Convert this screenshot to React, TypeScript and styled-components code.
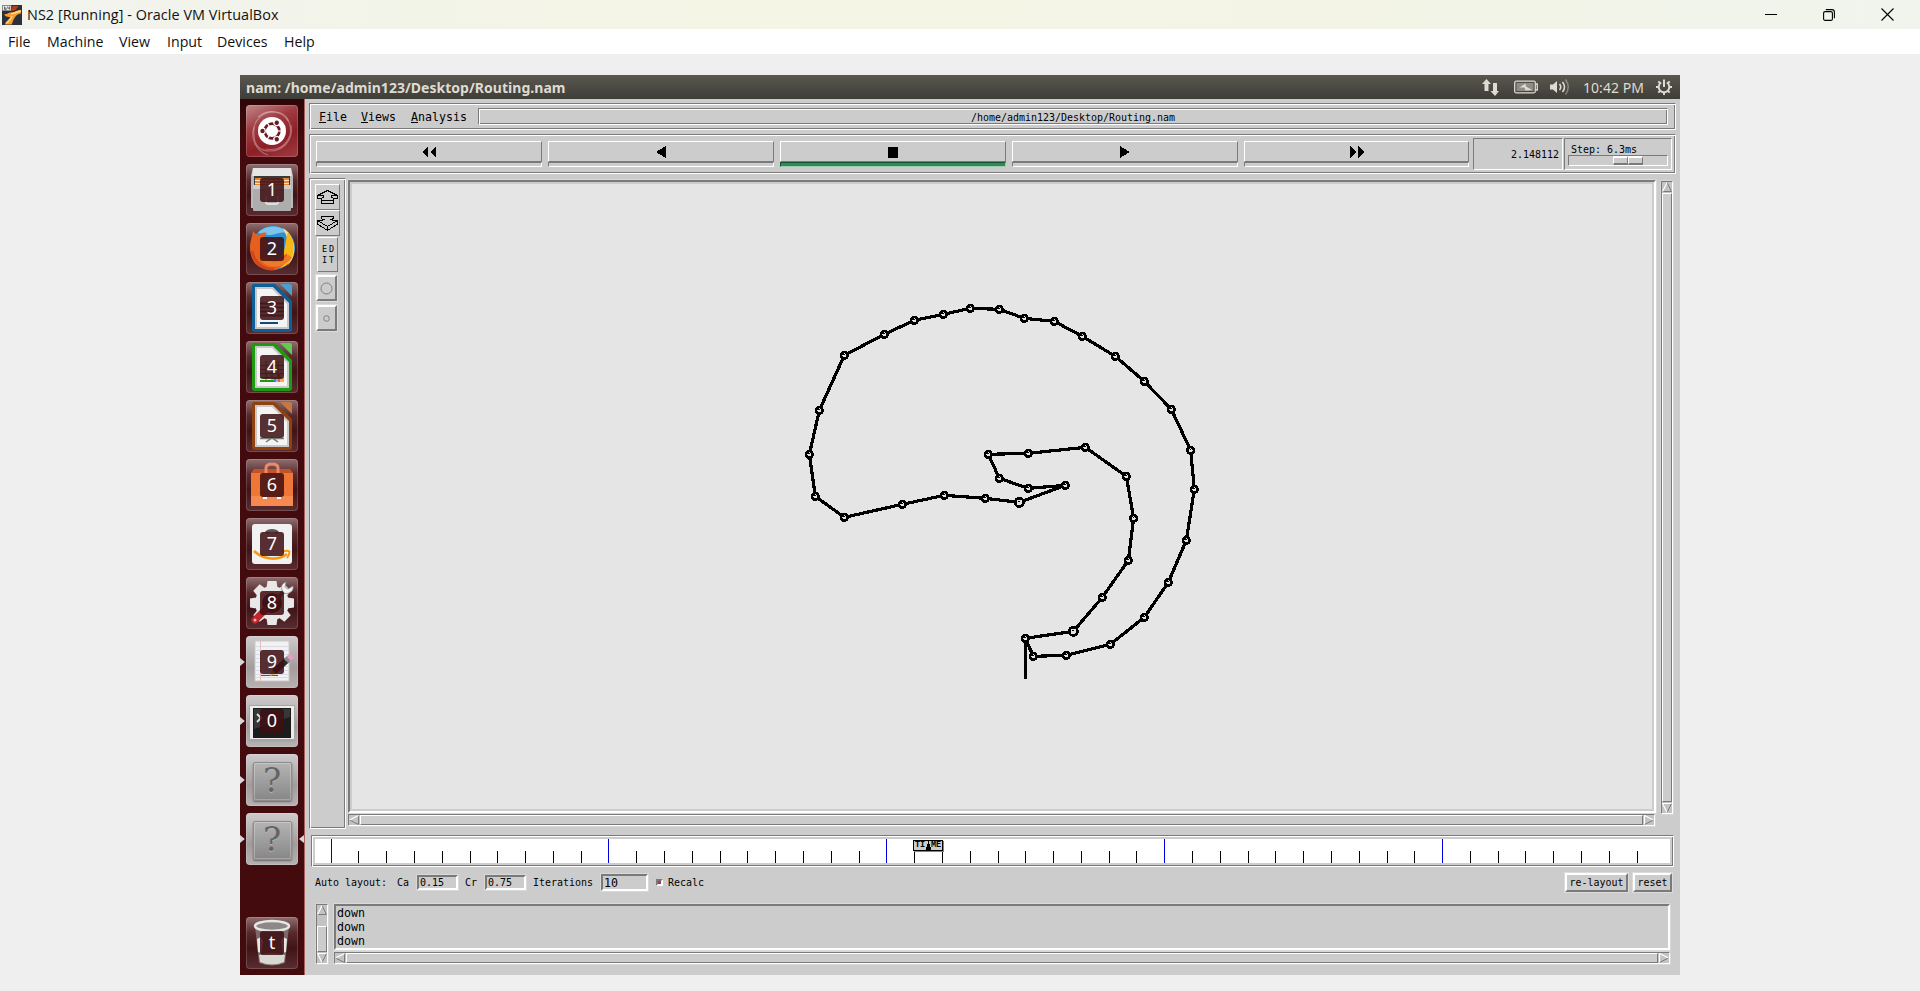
import React from 'react';
import styled, { createGlobalStyle, css } from 'styled-components';

const FACE = '#cccccc';
const DARK = '#7a7a7a';
const LIGHT = '#ffffff';

const GlobalStyle = createGlobalStyle`
  * { box-sizing: border-box; }
  body { margin: 0; background: #efefef; overflow: hidden; }
  svg { display: block; flex: none; }
`;

const sunken = css`
  border: 1px solid;
  border-color: ${DARK} ${LIGHT} ${LIGHT} ${DARK};
`;
const raised = css`
  border: 1px solid;
  border-color: ${LIGHT} ${DARK} ${DARK} ${LIGHT};
`;
const groove = css`
  ${sunken}
  box-shadow: inset 1px 1px ${LIGHT}, inset -1px -1px ${DARK};
`;

/* ---------- host window ---------- */

const HostWindow = styled.div`
  width: 1920px;
  height: 991px;
  display: flex;
  flex-direction: column;
  background: #efefef;
  font-family: 'Open Sans', 'Noto Sans', sans-serif;
  color: #111;
`;

const TitleBar = styled.header`
  height: 29px;
  display: flex;
  align-items: center;
  padding-left: 2px;
  background: linear-gradient(90deg, #f1f3ee 0%, #f4f5e4 40%, #f3f4e6 70%, #f1f4ed 100%);
`;

const HostTitle = styled.span`
  margin: -1px 0 0 5px;
  font-size: 14.4px;
  letter-spacing: 0.05px;
  white-space: nowrap;
`;

const WindowControls = styled.div`
  margin-left: auto;
  display: flex;
  align-items: center;
  gap: 46px;
  padding-right: 26px;
`;

const HostMenu = styled.nav`
  height: 25px;
  display: flex;
  align-items: center;
  padding: 0 0 1px 8px;
  background: #fff;
  font-size: 14.2px;
`;

const HostMenuItem = styled.span<{ $w: number }>`
  width: ${(p) => p.$w}px;
  white-space: nowrap;
`;

/* ---------- guest desktop ---------- */

const Guest = styled.main`
  width: 1440px;
  height: 900px;
  margin: 21px 0 0 240px;
  display: flex;
  flex-direction: column;
  background: ${FACE};
`;

const Panel = styled.div`
  height: 24px;
  display: flex;
  align-items: center;
  padding: 0 8px 0 6px;
  background: linear-gradient(#5a584f, #3e3d38);
  color: #dfdbd2;
`;

const PanelTitle = styled.span`
  font: 700 14px/23px 'Noto Sans', sans-serif;
  letter-spacing: 0.03px;
  white-space: nowrap;
`;

const Indicators = styled.div`
  margin-left: auto;
  display: flex;
  align-items: center;
  > svg + svg { margin-left: 15px; }
  > svg + svg + svg { margin-left: 12px; }
`;

const Clock = styled.span`
  width: 60px;
  margin: 0 13px;
  font: 400 14px/23px 'Noto Sans', sans-serif;
  letter-spacing: 0.05px;
  white-space: nowrap;
`;

const Desktop = styled.div`
  flex: 1;
  display: flex;
  min-height: 0;
`;

const Launcher = styled.aside`
  width: 65px;
  display: flex;
  flex-direction: column;
  padding: 6px 6px 6px 0;
  gap: 7px;
  background: linear-gradient(#2d0608 0, #430b0e 40px, #430b0e 100%);
  border-right: 1px solid #a8605f;
`;

const LauncherSlot = styled.div<{ $last?: boolean }>`
  display: flex;
  align-items: center;
  height: 52px;
  margin-top: ${(p) => (p.$last ? 'auto' : '0')};
`;

const Pip = styled.span<{ $on?: boolean; $side?: 'right' }>`
  flex: none;
  width: ${(p) => (p.$side ? 5 : 6)}px;
  height: 8px;
  background: ${(p) => (p.$on ? '#dad6d7' : 'transparent')};
  clip-path: ${(p) => (p.$side ? 'polygon(100% 0, 0 50%, 100% 100%)' : 'polygon(0 0, 80% 50%, 0 100%)')};
  margin-left: ${(p) => (p.$side ? '1px' : '0')};
`;

const tileSkins = {
  dash: 'linear-gradient(155deg, #c08a8c 0%, #a03b40 35%, #8c1f25 65%, #a13c42 100%)',
  dark: 'linear-gradient(#8f6f70 0%, #57292c 30%, #401417 60%, #5a2c2f 100%)',
  lit: 'linear-gradient(#cfcbcc 0%, #b2acad 40%, #a39c9d 60%, #b8b2b3 100%)',
};

const Tile = styled.div<{ $skin: keyof typeof tileSkins }>`
  flex: none;
  width: 52px;
  height: 52px;
  display: grid;
  place-items: center;
  border-radius: 4px;
  background: ${(p) => tileSkins[p.$skin]};
  box-shadow: inset 0 0 0 1px rgba(255, 255, 255, 0.16);
  > * { grid-area: 1 / 1; }
`;

const KeyHint = styled.span`
  width: 24px;
  height: 24px;
  border-radius: 3px;
  background: rgba(62, 14, 18, 0.86);
  color: #fff;
  font: 400 18px/23px 'Noto Sans', sans-serif;
  text-align: center;
  z-index: 1;
`;

/* ---------- nam window ---------- */

const NamWindow = styled.section`
  flex: 1;
  min-width: 0;
  display: flex;
  flex-direction: column;
  padding: 4px 4px 0;
  background: ${FACE};
  color: #000;
  font-family: 'DejaVu Sans Mono', 'Liberation Mono', monospace;
`;

const text7 = css`
  font-size: 11.63px;
  line-height: 14px;
  white-space: pre;
`;
const text6 = css`
  font-size: 9.97px;
  line-height: 12px;
  white-space: pre;
`;

const MenuRow = styled.div`
  ${groove}
  height: 27px;
  display: flex;
  align-items: center;
  padding: 0 7px 0 9px;
`;

const NamMenu = styled.span<{ $w: number }>`
  ${text7}
  width: ${(p) => p.$w}px;
  padding-top: 1px;
`;

const Hot = styled.u`
  text-decoration-thickness: 1px;
  text-underline-offset: 1px;
`;

const PathBox = styled.div`
  ${groove}
  ${text6}
  flex: 1;
  height: 17px;
  line-height: 17px;
  text-align: center;
`;

const Toolbar = styled.div`
  ${groove}
  height: 40px;
  margin-top: 4px;
  padding: 3px 3px 0 6px;
  display: flex;
`;

const Transport = styled.div`
  width: 226px;
  margin: 3px 6px 0 0;
  &:nth-child(5) {
    width: 225px;
    margin-right: 7px;
  }
`;

const TransportKey = styled.div`
  ${raised}
  height: 21px;
  display: grid;
  place-items: center;
`;

const TransportLamp = styled.div<{ $on?: boolean }>`
  height: 5px;
  border: 1px solid;
  border-color: ${(p) => (p.$on ? '#1b5434 #9fcbb2 #9fcbb2 #1b5434' : `${DARK} ${LIGHT} ${LIGHT} ${DARK}`)};
  background: ${(p) => (p.$on ? '#2e8b57' : FACE)};
`;

const Readout = styled.div`
  ${sunken}
  ${text6}
  width: 90px;
  height: 32px;
  margin: 0 1px 0 -3px;
  padding-right: 3px;
  line-height: 31px;
  text-align: right;
`;

const StepBox = styled.div`
  ${sunken}
  ${text6}
  width: 108px;
  height: 32px;
  padding: 5px 3px 0;
`;

const StepText = styled.span`
  display: block;
  height: 11px;
  padding-left: 3px;
  line-height: 11px;
`;

const Slider = styled.div`
  ${sunken}
  height: 11px;
  padding-left: 44px;
`;

const SliderThumb = styled.div`
  display: flex;
  width: 30px;
  height: 9px;
  > i {
    flex: 1;
    border: solid;
    border-width: 2px 1px 2px 1px;
    border-color: ${LIGHT} ${DARK} ${DARK} ${LIGHT};
  }
`;

const Body = styled.div`
  height: 651px;
  margin-top: 4px;
  display: flex;
`;

const ToolColumn = styled.div`
  ${groove}
  width: 37px;
  padding: 5px 0 0 5px;
`;

const Tool = styled.div<{ $w: number; $h: number; $ml?: number; $gap?: number; $thick?: boolean }>`
  ${raised}
  width: ${(p) => p.$w}px;
  height: ${(p) => p.$h}px;
  margin: 0 0 ${(p) => p.$gap ?? 0}px ${(p) => p.$ml ?? 0}px;
  border-width: ${(p) => (p.$thick ? '2px' : '1px')};
  outline: ${(p) => (p.$thick ? '1px solid #dcdcdc' : 'none')};
  display: grid;
  place-items: center;
  align-content: center;
`;

const EditLabel = styled.span`
  font: 400 8.5px/11px 'DejaVu Sans Mono', monospace;
  letter-spacing: 2px;
  padding-left: 3px;
  white-space: pre;
`;

const CanvasColumn = styled.div`
  width: 1308px;
  margin: 2px 5px 0 2px;
  display: flex;
  flex-direction: column;
  gap: 1px;
`;

const CanvasFrame = styled.div`
  height: 633px;
  border: 2px solid;
  border-color: ${DARK} ${LIGHT} ${LIGHT} ${DARK};
  padding: 2px;
  box-shadow: 0 0 0 1px #d9d9d9;
`;

const Canvas = styled.div`
  height: 625px;
  background: #e5e5e5;
`;

const VBarHolder = styled.div`
  padding-top: 3px;
`;

const Bar = styled.div<{ $vertical?: boolean; $len: number }>`
  ${sunken}
  display: flex;
  flex-direction: ${(p) => (p.$vertical ? 'column' : 'row')};
  width: ${(p) => (p.$vertical ? 12 : p.$len)}px;
  height: ${(p) => (p.$vertical ? p.$len : 12)}px;
  background: #c3c3c3;
  box-shadow: 0 0 0 1px #d6d6d6;
`;

const Thumb = styled.div<{ $before?: number; $vertical?: boolean }>`
  ${raised}
  flex: 1;
  margin: ${(p) => (p.$vertical ? `${p.$before ?? 1}px 0 1px` : `0 1px 0 ${p.$before ?? 1}px`)};
  background: ${FACE};
`;

const Timeline = styled.div`
  ${groove}
  height: 32px;
  width: 1363px;
  margin: 6px 0 0 2px;
  padding: 3px;
`;

const Track = styled.div`
  position: relative;
  height: 24px;
  background: #fff;
`;

const TimeMarker = styled.div`
  position: absolute;
  left: 598px;
  top: 1px;
  width: 30px;
  height: 11px;
  border: 1px solid #000;
  box-shadow: 1px 1px #808080;
  background: ${FACE};
  display: flex;
  justify-content: center;
  align-items: center;
`;

const MarkerText = styled.span`
  width: 11px;
  font: 700 8.5px/9px 'Liberation Mono', monospace;
  text-align: center;
`;

const Options = styled.div`
  ${text6}
  display: flex;
  align-items: center;
  height: 21px;
  margin: 5px 3px 0 6px;
`;

const Label = styled.span<{ $w?: number }>`
  width: ${(p) => (p.$w ? `${p.$w}px` : 'auto')};
  padding-top: 1px;
`;

const Entry = styled.div<{ $w: number; $big?: boolean }>`
  ${(p) => (p.$big ? text7 : text6)}
  width: ${(p) => p.$w}px;
  height: ${(p) => (p.$big ? 17 : 15)}px;
  line-height: ${(p) => (p.$big ? 14 : 12)}px;
  padding-left: 1px;
  margin: 0 7px 0 1px;
  border: 2px solid;
  border-color: ${DARK} ${LIGHT} ${LIGHT} ${DARK};
  box-shadow: 0 0 0 1px #d9d9d9;
`;

const Check = styled.i`
  width: 7px;
  height: 7px;
  margin: 0 5px 0 1px;
  border: 2px solid;
  border-color: ${DARK} ${LIGHT} ${LIGHT} ${DARK};
  background: #b03060;
`;

const PushButton = styled.button<{ $w: number }>`
  ${text6}
  width: ${(p) => p.$w}px;
  height: 19px;
  padding: 1px 0 0;
  margin: 0 1px 0 4px;
  border: 2px solid;
  border-color: ${LIGHT} ${DARK} ${DARK} ${LIGHT};
  box-shadow: 0 0 0 1px #dcdcdc;
  border-radius: 0;
  background: ${FACE};
  color: #000;
  font-family: inherit;
`;

const Spacer = styled.span`
  flex: 1;
`;

const Console = styled.div`
  display: flex;
  gap: 6px;
  margin: 11px 0 0 7px;
`;

const Output = styled.div`
  ${text7}
  width: 1336px;
  height: 46px;
  margin-bottom: 2px;
  padding: 0 1px;
  border: 2px solid;
  border-color: ${DARK} ${LIGHT} ${LIGHT} ${DARK};
  box-shadow: 0 0 0 1px #d9d9d9;
`;

/* ---------- drawings ---------- */

type Dir = 'up' | 'down' | 'left' | 'right';

const arrowEdges: Record<Dir, [string, string]> = {
  up: ['M5 0.5 L0.5 9.5', 'M5 0.5 L9.5 9.5 H0.5'],
  down: ['M9.5 0.5 H0.5 L5 9.5', 'M5 9.5 L9.5 0.5'],
  left: ['M9.5 0.5 L0.5 5', 'M9.5 0.5 V9.5 L0.5 5'],
  right: ['M9.5 5 L0.5 0.5 V9.5', 'M0.5 9.5 L9.5 5'],
};

const Arrow = ({ dir }: { dir: Dir }) => (
  <svg width="10" height="10" viewBox="0 0 10 10" fill="none">
    <path d={arrowEdges[dir][1]} stroke={DARK} />
    <path d={arrowEdges[dir][0]} stroke={LIGHT} strokeWidth="1.2" />
  </svg>
);

const ScrollBar = ({ vertical, len, before }: { vertical?: boolean; len: number; before?: number }) => (
  <Bar $vertical={vertical} $len={len}>
    <Arrow dir={vertical ? 'up' : 'left'} />
    <Thumb $vertical={vertical} $before={before} />
    <Arrow dir={vertical ? 'down' : 'right'} />
  </Bar>
);

/* node centres, in thirds of a pixel */
const nodes: [number, number][] = [
  [736, 1045], [880, 1024], [967, 922], [1045, 811], [1061, 685], [1039, 559], [916, 472], [745, 490],
  [625, 493], [658, 565], [745, 595], [856, 586], [718, 637], [616, 625], [493, 616], [367, 643],
  [193, 682], [106, 619], [88, 493], [118, 361], [193, 196], [313, 133], [403, 91], [490, 73], [571, 55],
  [658, 58], [733, 85], [823, 94], [907, 139], [1006, 199], [1093, 274], [1174, 358], [1232, 481],
  [1243, 598], [1219, 751], [1165, 877], [1093, 982], [991, 1063], [859, 1096], [760, 1099],
];
const bigNodes = new Set([1, 12]);

const Topology = () => (
  <svg width="1300" height="625" viewBox="0 0 1300 625" shapeRendering="crispEdges">
    <g transform="translate(428 106) scale(0.33333)" fill="none" stroke="#000">
      <polyline points={nodes.map((p) => p.join(',')).join(' ')} strokeWidth="9.6" />
      <path d="M760 1099 L736 1045 V1168" strokeWidth="10" />
      {nodes.map(([x, y], i) => (
        <circle key={i} cx={x} cy={y} r={bigNodes.has(i) ? 12.5 : 9.7} fill="#e5e5e5" strokeWidth="8" />
      ))}
      {nodes.map(([x, y], i) => (
        <path key={i} d={`M${x - 3} ${y - 1} h4`} strokeWidth="3" />
      ))}
    </g>
  </svg>
);

const Ticks = () => (
  <svg width="1355" height="24" shapeRendering="crispEdges">
    {Array.from({ length: 48 }, (_, n) => {
      const x = Math.floor(16.1 + n * 27.788);
      const major = n % 10 === 0;
      return <rect key={n} x={x} y={major ? 0 : 12} width="1" height={major ? 24 : 12} fill={major ? '#0000e0' : '#000'} />;
    })}
  </svg>
);

const HostLogo = () => (
  <svg width="20" height="20" viewBox="0 0 20 20">
    <rect width="20" height="20" fill="#2b303a" />
    <path d="M2 9 C5 10 6 7 9 7.500 C12 8 14 5 19 5 V8.500 C15 9 14 11 12.500 13 C11 15 11 17 9.500 19.500 H3 C4 16 8 14 8 12 C6 12 3.500 12 2 9Z" fill="#f79d2c" />
    <path d="M9 8.500 C13 9 14 6.500 19 6" stroke="#ffe08a" strokeWidth="1.500" fill="none" />
    <path d="M4 18.500 C6 16 9.500 15 10 11" stroke="#ffd27a" strokeWidth="1.500" fill="none" />
    <path d="M10.500 1 h6 l-3 4 -4 1.500Z" fill="#b3401c" />
    <rect x="0.500" y="0.500" width="8.500" height="5" fill="#e9e9e9" stroke="#8a8a8a" strokeWidth=".6" />
    <path d="M2.500 1.500 V4.500 H4.200 V3 H2.500 M5.700 1.500 V3.200 H7.500 M7.500 1.500 V4.700" stroke="#444" strokeWidth=".7" fill="none" />
  </svg>
);

const Document = ({ edge, corner, children }: { edge: string; corner: string; children?: React.ReactNode }) => (
  <svg width="52" height="52" viewBox="0 0 52 52">
    <path d="M8 2 H29 L46 19 V47 Q46 50 43 50 H9 Q6 50 6 47 V4 Q6 2 8 2Z" fill={edge} />
    <path d="M9 5 H27 L43 21 V47 H9Z" fill="#c8c8c8" />
    <path d="M11 7 H26 L41 22 V45 H11Z" fill="#f4f4f4" />
    <path d="M34 2 H44 Q46 2 46 4 V14Z" fill={corner} />
    {children}
  </svg>
);

const DashIcon = () => (
  <svg width="52" height="52" viewBox="0 0 52 52" fill="none">
    <g stroke="#fff" strokeOpacity=".3" strokeWidth="1.200">
      <path d="M8 30 C6 14 18 6 30 7 C42 8 46 20 44 30" />
      <path d="M45 20 C48 36 36 46 24 46 C12 46 8 38 8 30" />
      <path d="M22 50 C10 46 4 34 8 22 M12 12 C24 2 38 8 42 16 M44 30 C40 42 30 46 20 44" />
    </g>
    <circle cx="26" cy="26" r="14" fill="#fff" />
    <circle cx="26" cy="26" r="7.400" stroke="#6d1a1f" strokeWidth="2.600" />
    {[180, 300, 60].map((a) => (
      <circle key={a} cx="35.500" cy="26" r="2.800" fill="#6d1a1f" stroke="#fff" strokeWidth="1.200" transform={`rotate(${a} 26 26)`} />
    ))}
    {[0, 120, 240].map((a) => (
      <path key={a} d="M31 26 H36" stroke="#fff" strokeWidth="1.200" transform={`rotate(${a} 26 26)`} />
    ))}
  </svg>
);

const FilesIcon = () => (
  <svg width="52" height="52" viewBox="0 0 52 52">
    <path d="M7 4 H45 L47 12 V44 H5 V12Z" fill="#b9b9b9" />
    <path d="M7 4 H45 L46 12 H6Z" fill="#e6e6e6" />
    <rect x="8" y="12" width="36" height="10" fill="#3a3a3a" />
    <rect x="9" y="14" width="34" height="8" fill="#e98634" />
    <path d="M9 16.500 H43 M9 19.500 H43" stroke="#fbe3c4" />
    <path d="M7 21 H45 V46 Q45 47 44 47 H8 Q7 47 7 46Z" fill="#adadad" />
    <path d="M7 21 H45 V25 H7Z" fill="#cfcfcf" />
    <path d="M20 32 V38 Q20 40 22 40 H30 Q32 40 32 38 V32" fill="none" stroke="#dedede" strokeWidth="2" />
  </svg>
);

const FirefoxIcon = () => (
  <svg width="52" height="52" viewBox="0 0 52 52">
    <circle cx="27" cy="25" r="22" fill="#2e8fd0" />
    <path d="M12 10 C20 1 36 2 42 10 C34 8 30 12 22 12Z" fill="#7cc5ec" />
    <path d="M37 5 C50 13 52 32 42 42 C46 30 44 20 37 5Z" fill="#fbe38a" />
    <path d="M42 9 C50 18 49 32 43 40 C36 48 22 46 17 36 C22 40 34 40 38 28 C40 20 40 14 42 9Z" fill="#f7b516" />
    <path d="M7 8 C9 10 10 12 13 12 C16 9 19 9 21 10 C18 13 18 15 19 18 C23 19 24 20 21 23 C16 25 18 33 26 34 C32 36 40 32 41 30 C42 40 34 48 24 47 C10 46 4 36 4 25 C4 18 6 14 7 8Z" fill="#e5601f" />
    <path d="M16 35 C22 43 36 44 44 33" stroke="#ef7a28" strokeWidth="5" fill="none" />
    <path d="M6 28 C8 40 18 47 28 46" stroke="#d2451d" strokeWidth="3" fill="none" />
  </svg>
);

const BagIcon = () => (
  <svg width="52" height="52" viewBox="0 0 52 52">
    <path d="M5 14 L8 10 H44 L47 14Z" fill="#c4532a" />
    <path d="M20 14 V9 Q20 5 26 5 Q32 5 32 9 V14" fill="none" stroke="#e98a68" strokeWidth="3" />
    <rect x="5" y="14" width="42" height="33" fill="#ee7636" />
    <rect x="5" y="37" width="42" height="10" fill="#f58a50" />
    <path d="M17 39 h4 M31 39 h4" stroke="#fff" strokeWidth="2" />
  </svg>
);

const AmazonIcon = () => (
  <svg width="52" height="52" viewBox="0 0 52 52">
    <rect x="6" y="6" width="40" height="40" rx="3" fill="#f1f1f1" />
    <path d="M20 14.500 Q26 10.500 32 14.500" stroke="#555" strokeWidth="3" fill="none" />
    <path d="M8 33 C18 42 32 43 41 36" fill="none" stroke="#f79a0f" strokeWidth="2.600" />
    <path d="M36 34 Q41 32 43.500 33.500 Q43.500 37 41 40" fill="none" stroke="#f79a0f" strokeWidth="2" />
  </svg>
);

const SettingsIcon = () => (
  <svg width="52" height="52" viewBox="0 0 52 52">
    <g fill="#e8e8e8">
      {[0, 45, 90, 135, 180, 225, 270, 315].map((a) => (
        <path key={a} d="M21.500 4 H30.500 L32 14 H20Z" transform={`rotate(${a} 26 26)`} />
      ))}
    </g>
    <circle cx="26" cy="26" r="13.500" fill="none" stroke="#e8e8e8" strokeWidth="7" />
    <path d="M38 14 L24 30" stroke="#6f5556" strokeWidth="4" />
    <path d="M40 5 Q34 7 36 13 Q38 18 43 16 Q48 14 47 9 L42 12 L39 10Z" fill="#f2f2f2" stroke="#8b8b8b" strokeWidth=".8" />
    <path d="M19 33 L9 43" stroke="#c1262b" strokeWidth="7" strokeLinecap="round" />
    <circle cx="9" cy="43" r="1.500" fill="#f1b7b7" />
  </svg>
);

const EditorIcon = () => (
  <svg width="52" height="52" viewBox="0 0 52 52">
    <rect x="9" y="5" width="34" height="40" fill="#f2f2f2" stroke="#c9c9c9" />
    {[10, 14, 18, 22, 26, 30, 34, 38, 41].map((y) => (
      <path key={y} d={`M10 ${y}.5 H42`} stroke="#ccd4e2" strokeWidth=".7" />
    ))}
    <path d="M14.500 5 V45" stroke="#e9a9a9" strokeWidth=".7" />
    <path d="M15 39.500 H32" stroke="#555" />
    <path d="M28 36 L41 24" stroke="#2b2b2b" strokeWidth="6" />
    <path d="M40 25 L43 22" stroke="#8d8d8d" strokeWidth="6" />
    <path d="M42.500 22.500 L46 19.500" stroke="#e3a0c0" strokeWidth="6" />
    <path d="M24 40 L26 34 L30 38Z" fill="#d8b84a" />
  </svg>
);

const TerminalIcon = () => (
  <svg width="52" height="52" viewBox="0 0 52 52">
    <rect x="3" y="10" width="46" height="37" rx="1" fill="#a6a6a6" />
    <rect x="4" y="11" width="44" height="33" fill="#ececec" />
    <rect x="7" y="13" width="38" height="30" fill="#1c1c1c" />
    <path d="M8 14 H44 V22 L8 34Z" fill="#4a4a4a" opacity=".6" />
    <path d="M11 19 L15 23 L11 27" stroke="#ddd" strokeWidth="2" fill="none" />
  </svg>
);

const UnknownPlate = styled.div`
  width: 39px;
  height: 39px;
  margin-top: 2px;
  border: 1px solid #8d8d8d;
  border-radius: 2px;
  background: linear-gradient(#b4b4b4, #878787);
  box-shadow: inset 0 0 0 1px rgba(255, 255, 255, 0.25), 0 1px 2px #6a6a6a;
  color: #646464;
  font: 400 34px/35px 'DejaVu Serif', serif;
  text-align: center;
  text-shadow: 0 1px #b5b5b5;
`;

const TrashIcon = () => (
  <svg width="52" height="52" viewBox="0 0 52 52">
    <path d="M9 9 L13 46 Q26 51 39 46 L43 9Z" fill="#8f8585" opacity=".7" />
    <path d="M13 38 Q26 34 39 38 L38 45 Q26 50 14 45Z" fill="#d9d9d4" />
    <path d="M11 22 l4 -2 2 4 -2 12 -3 -1Z M41 22 l-4 -2 -2 4 2 12 3 -1Z" fill="#e8e8e4" />
    <ellipse cx="26" cy="9" rx="17" ry="5" fill="#8d8787" stroke="#e6e6e2" strokeWidth="2.500" />
  </svg>
);

type LauncherItem = {
  icon: React.ReactNode;
  hint?: string;
  skin: keyof typeof tileSkins;
  running?: boolean;
  focused?: boolean;
};

const launcherItems: LauncherItem[] = [
  { icon: <DashIcon />, skin: 'dash' },
  { icon: <FilesIcon />, hint: '1', skin: 'dark' },
  { icon: <FirefoxIcon />, hint: '2', skin: 'dark' },
  {
    icon: (
      <Document edge="#0f5f97" corner="#4a9fd0">
        <path d="M14 21.500 H38 M14 25.500 H38 M14 29.500 H38 M14 33.500 H38" stroke="#555" strokeWidth="2" />
        <path d="M14 41 H32" stroke="#114a75" strokeWidth="2" />
      </Document>
    ),
    hint: '3',
    skin: 'dark',
  },
  {
    icon: (
      <Document edge="#1e9a12" corner="#5fcb50">
        <rect x="14" y="20" width="24" height="20" fill="#e4f2df" />
        <path d="M14 24.500 H38 M14 28.500 H38 M14 32.500 H38 M14 36.500 H38 M20 20 V40 M26 20 V40 M32 20 V40" stroke="#4c8a3a" />
        <path d="M14 40 h14" stroke="#1e9a12" strokeWidth="2" />
        <path d="M29 41 v-5" stroke="#2c8fd8" strokeWidth="3" />
        <path d="M33 41 v-9" stroke="#f0622b" strokeWidth="3" />
        <path d="M36.500 41 v-5" stroke="#f8b51f" strokeWidth="3" />
      </Document>
    ),
    hint: '4',
    skin: 'dark',
  },
  {
    icon: (
      <Document edge="#8f4210" corner="#c67742">
        <path d="M20 42 L26 38 L32 42 M14 38.500 H38" stroke="#777" strokeWidth="1.500" fill="none" />
      </Document>
    ),
    hint: '5',
    skin: 'dark',
  },
  { icon: <BagIcon />, hint: '6', skin: 'dark' },
  { icon: <AmazonIcon />, hint: '7', skin: 'dark' },
  { icon: <SettingsIcon />, hint: '8', skin: 'dark' },
  { icon: <EditorIcon />, hint: '9', skin: 'lit', running: true },
  { icon: <TerminalIcon />, hint: '0', skin: 'lit', running: true },
  { icon: <UnknownPlate>?</UnknownPlate>, skin: 'lit', running: true },
  { icon: <UnknownPlate>?</UnknownPlate>, skin: 'lit', running: true, focused: true },
  { icon: <TrashIcon />, hint: 't', skin: 'dark' },
];

const transportGlyphs = [
  <path d="M6 0 V12 L0 6Z M14 0 V12 L8 6Z" />,
  <path d="M12 0 V12 L2 6Z" />,
  <rect x="2" y="1" width="10" height="11" />,
  <path d="M2 0 V12 L12 6Z" />,
  <path d="M0 0 V12 L6 6Z M8 0 V12 L14 6Z" />,
];

/* ---------- page ---------- */

export default function App() {
  return (
    <HostWindow>
      <GlobalStyle />
      <TitleBar>
        <HostLogo />
        <HostTitle>NS2 [Running] - Oracle VM VirtualBox</HostTitle>
        <WindowControls>
          <svg width="12" height="12"><path d="M0 5.500 H12" stroke="#000" /></svg>
          <svg width="12" height="12" viewBox="0 0 12 12" fill="none" stroke="#000" strokeWidth="1.100">
            <rect x="0.600" y="2.600" width="8.800" height="8.800" rx="1.500" />
            <path d="M2.800 0.600 H9 Q11.400 0.600 11.400 3 V9.200" />
          </svg>
          <svg width="13" height="13" viewBox="0 0 13 13"><path d="M0.500 0.500 L12.500 12.500 M12.500 0.500 L0.500 12.500" stroke="#000" strokeWidth="1.100" /></svg>
        </WindowControls>
      </TitleBar>
      <HostMenu>
        <HostMenuItem $w={39}>File</HostMenuItem>
        <HostMenuItem $w={72}>Machine</HostMenuItem>
        <HostMenuItem $w={48}>View</HostMenuItem>
        <HostMenuItem $w={50}>Input</HostMenuItem>
        <HostMenuItem $w={67}>Devices</HostMenuItem>
        <HostMenuItem $w={40}>Help</HostMenuItem>
      </HostMenu>

      <Guest>
        <Panel>
          <PanelTitle>nam: /home/admin123/Desktop/Routing.nam</PanelTitle>
          <Indicators>
            <svg width="17" height="17" viewBox="0 0 17 17" fill="#dfdbd2">
              <path d="M4.500 0 L9 5 H6.500 V12 H2.500 V5 H0Z" />
              <path d="M13 17 L8.500 12 H11 V4 H15 V12 H17Z" />
            </svg>
            <svg width="24" height="14" viewBox="0 0 24 14">
              <rect x="0.700" y="1.200" width="20.600" height="11.600" rx="1.500" fill="none" stroke="#dfdbd2" strokeWidth="1.300" />
              <rect x="2.500" y="3" width="17" height="8" fill="#8f8d86" />
              <path d="M22 4 h1.300 v6 h-1.300" fill="none" stroke="#dfdbd2" strokeWidth="1.300" />
              <path d="M5.500 7.500 L11.500 3.500 L12 6.500 L18 10 L11.500 10.500 L10.500 7.500Z" fill="#dfdbd2" />
            </svg>
            <svg width="20" height="16" viewBox="0 0 20 16" fill="none" stroke="#dfdbd2">
              <path d="M0 5.500 H3 L7 2 V14 L3 10.500 H0Z" fill="#dfdbd2" stroke="none" />
              <path d="M9.500 5 Q12 8 9.500 11" strokeWidth="1.600" />
              <path d="M12.500 3 Q16.500 8 12.500 13" strokeWidth="1.600" />
              <path d="M15.500 0.500 Q21 8 15.500 15.500" strokeWidth="1.600" opacity=".4" />
            </svg>
            <Clock>10:42 PM</Clock>
            <svg width="16" height="16" viewBox="0 0 16 16" fill="none" stroke="#dfdbd2">
              <path d="M5.200 3.500 A5.300 5.300 0 1 0 10.800 3.500" strokeWidth="1.900" />
              <path d="M8 0.500 V8" strokeWidth="2" />
              <path d="M0 8 H2.500 M13.500 8 H16 M8 13.500 V16 M2.300 2.300 L4 4 M13.700 2.300 L12 4 M2.300 13.700 L4 12 M13.700 13.700 L12 12" strokeWidth="1.900" />
            </svg>
          </Indicators>
        </Panel>

        <Desktop>
          <Launcher>
            {launcherItems.map((item, i) => (
              <LauncherSlot key={i} $last={i === launcherItems.length - 1}>
                <Pip $on={item.running} />
                <Tile $skin={item.skin}>
                  {item.icon}
                  {item.hint && <KeyHint>{item.hint}</KeyHint>}
                </Tile>
                {item.focused && <Pip $on $side="right" />}
              </LauncherSlot>
            ))}
          </Launcher>

          <NamWindow>
            <MenuRow>
              <NamMenu $w={42}><Hot>F</Hot>ile</NamMenu>
              <NamMenu $w={50}><Hot>V</Hot>iews</NamMenu>
              <NamMenu $w={67}><Hot>A</Hot>nalysis</NamMenu>
              <PathBox>/home/admin123/Desktop/Routing.nam</PathBox>
            </MenuRow>

            <Toolbar>
              {transportGlyphs.map((glyph, i) => (
                <Transport key={i}>
                  <TransportKey>
                    <svg width="14" height="12" viewBox="0 0 14 12" shapeRendering="crispEdges">{glyph}</svg>
                  </TransportKey>
                  <TransportLamp $on={i === 2} />
                </Transport>
              ))}
              <Readout>2.148112</Readout>
              <StepBox>
                <StepText>Step: 6.3ms</StepText>
                <Slider><SliderThumb><i /><i /></SliderThumb></Slider>
              </StepBox>
            </Toolbar>

            <Body>
              <ToolColumn>
                <Tool $w={25} $h={26}>
                  <svg width="21" height="15" viewBox="0 0 21 15" fill="none" stroke="#000" shapeRendering="crispEdges">
                    <path d="M10.500 0.500 L20.500 5.500 V8.500 H16.500 V13.500 H4.500 V8.500 H0.500 V5.500Z M4.500 10.500 H16.500 M0.500 5.500 H6.500 V7 L4.500 8.500 M20.500 5.500 H14.500 V7 L16.500 8.500" />
                  </svg>
                </Tool>
                <Tool $w={25} $h={26} $gap={1}>
                  <svg width="21" height="15" viewBox="0 0 21 15" fill="none" stroke="#000" shapeRendering="crispEdges">
                    <path d="M4.500 0.500 H16.500 L15.500 4.500 H20.500 V8 L10.500 14.500 L0.500 8 V4.500 H5.500Z M0.500 4.500 L10.500 10.500 L20.500 4.500 M10.500 10.500 V14 M5.500 4.500 L8 3 M15.500 4.500 L13 3" />
                  </svg>
                </Tool>
                <Tool $w={21} $h={35} $ml={2} $gap={3}>
                  <EditLabel>ED</EditLabel>
                  <EditLabel>IT</EditLabel>
                </Tool>
                <Tool $w={21} $h={26} $ml={1} $gap={4} $thick>
                  <svg width="13" height="13"><circle cx="6.500" cy="6.500" r="5.500" fill="none" stroke="#808080" /></svg>
                </Tool>
                <Tool $w={21} $h={26} $ml={1} $thick>
                  <svg width="7" height="7"><circle cx="3.500" cy="3.500" r="2.800" fill="none" stroke="#808080" /></svg>
                </Tool>
              </ToolColumn>
              <CanvasColumn>
                <CanvasFrame>
                  <Canvas><Topology /></Canvas>
                </CanvasFrame>
                <ScrollBar len={1307} />
              </CanvasColumn>
              <VBarHolder>
                <ScrollBar vertical len={633} />
              </VBarHolder>
            </Body>

            <Timeline>
              <Track>
                <Ticks />
                <TimeMarker>
                  <MarkerText>TI</MarkerText>
                  <svg width="5" height="9" viewBox="0 0 5 9" shapeRendering="crispEdges"><path d="M2 0 H3 V3 H4 V6 H5 V9 H0 V6 H1 V3 H2Z" /></svg>
                  <MarkerText>ME</MarkerText>
                </TimeMarker>
              </Track>
            </Timeline>

            <Options>
              <Label $w={82}>Auto layout:</Label>
              <Label $w={19}>Ca</Label>
              <Entry $w={41}>0.15</Entry>
              <Label $w={19}>Cr</Label>
              <Entry $w={41}>0.75</Entry>
              <Label $w={67}>Iterations</Label>
              <Entry $w={47} $big>10</Entry>
              <Check />
              <Label>Recalc</Label>
              <Spacer />
              <PushButton $w={63}>re-layout</PushButton>
              <PushButton $w={39}>reset</PushButton>
            </Options>

            <Console>
              <ScrollBar vertical len={60} before={11} />
              <div>
                <Output>{'down\ndown\ndown'}</Output>
                <ScrollBar len={1336} />
              </div>
            </Console>
          </NamWindow>
        </Desktop>
      </Guest>
    </HostWindow>
  );
}
